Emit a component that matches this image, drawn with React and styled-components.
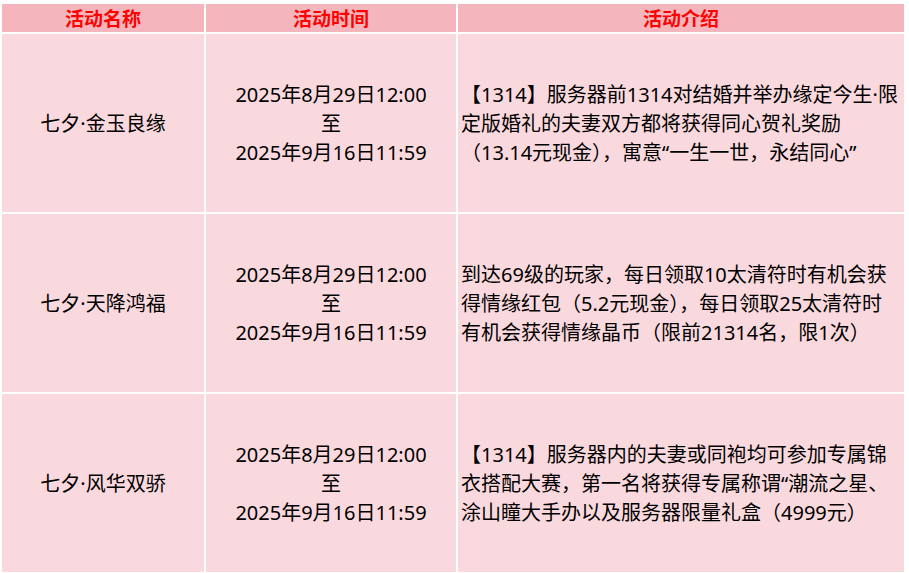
import React from "react";
import styled, { createGlobalStyle } from "styled-components";

const GlobalStyle = createGlobalStyle`
  html, body {
    margin: 0;
    padding: 0;
    background: #ffffff;
  }
  body {
    font-family: "Noto Sans", "Noto Sans CJK SC", sans-serif;
  }
`;

const Table = styled.div`
  display: grid;
  grid-template-columns: 202px 250px 446px;
  grid-auto-rows: 178px;
  grid-template-rows: 28px;
  gap: 2px;
  padding: 4px 5px 0 2px;
  height: 573px;
  box-sizing: border-box;
  overflow: hidden;
  background: #ffffff;
`;

const HeadCell = styled.div`
  background: #f4b6bc;
  color: #ff0000;
  font-family: "Noto Sans CJK SC", sans-serif;
  font-weight: 700;
  font-size: 19px;
  line-height: 28px;
  text-align: center;
`;

const Cell = styled.div`
  background: #fad9de;
  color: #000000;
  font-size: 20px;
  line-height: 29px;
  display: flex;
  align-items: center;
  justify-content: ${(p) => (p.$left ? "flex-start" : "center")};
  text-align: ${(p) => (p.$left ? "left" : "center")};
  padding: ${(p) => (p.$left ? "0 0 0 3px" : "0")};
  white-space: nowrap;
`;

const Lines = styled.div`
  display: flex;
  flex-direction: column;
`;

const rows = [
  {
    name: "七夕·金玉良缘",
    start: "2025年8月29日12:00",
    end: "2025年9月16日11:59",
    desc: [
      "【1314】服务器前1314对结婚并举办缘定今生·限",
      "定版婚礼的夫妻双方都将获得同心贺礼奖励",
      "（13.14元现金），寓意“一生一世，永结同心”",
    ],
  },
  {
    name: "七夕·天降鸿福",
    start: "2025年8月29日12:00",
    end: "2025年9月16日11:59",
    desc: [
      "到达69级的玩家，每日领取10太清符时有机会获",
      "得情缘红包（5.2元现金），每日领取25太清符时",
      "有机会获得情缘晶币（限前21314名，限1次）",
    ],
  },
  {
    name: "七夕·风华双骄",
    start: "2025年8月29日12:00",
    end: "2025年9月16日11:59",
    desc: [
      "【1314】服务器内的夫妻或同袍均可参加专属锦",
      "衣搭配大赛，第一名将获得专属称谓“潮流之星、",
      "涂山瞳大手办以及服务器限量礼盒（4999元）",
    ],
  },
];

const App = () => {
  return (
    <>
      <GlobalStyle />
      <Table>
        <HeadCell>活动名称</HeadCell>
        <HeadCell>活动时间</HeadCell>
        <HeadCell>活动介绍</HeadCell>
        {rows.map((r) => (
          <React.Fragment key={r.name}>
            <Cell>{r.name}</Cell>
            <Cell>
              <Lines>
                <span>{r.start}</span>
                <span>至</span>
                <span>{r.end}</span>
              </Lines>
            </Cell>
            <Cell $left>
              <Lines>
                {r.desc.map((line) => (
                  <span key={line}>{line}</span>
                ))}
              </Lines>
            </Cell>
          </React.Fragment>
        ))}
      </Table>
    </>
  );
};

export default App;
